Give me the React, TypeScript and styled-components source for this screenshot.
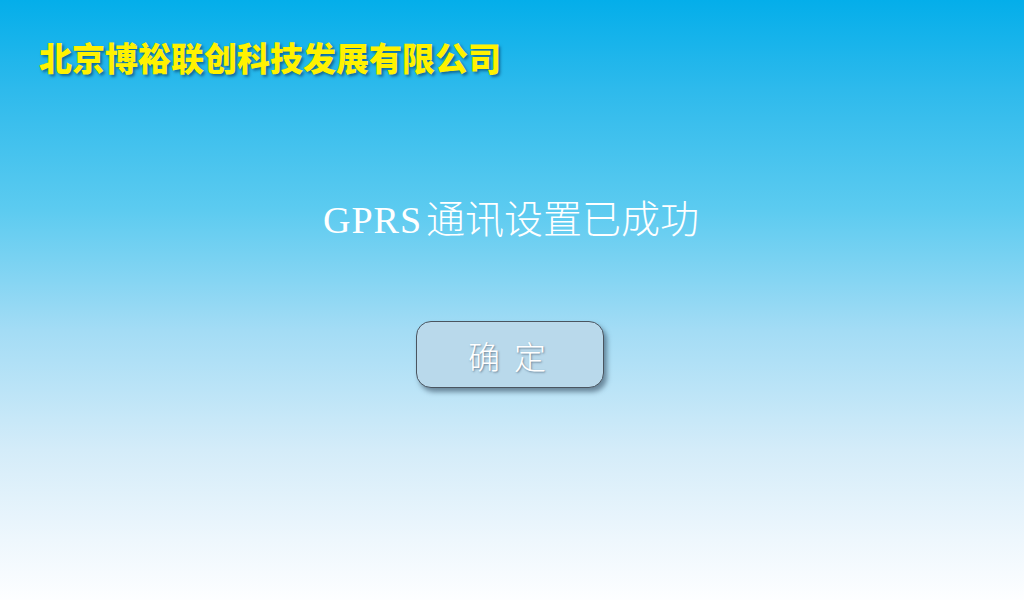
import React from "react";
import styled, { createGlobalStyle } from "styled-components";

const Global = createGlobalStyle`
  html, body { margin: 0; padding: 0; }
  body { width: 1024px; height: 600px; overflow: hidden; }
`;

const Screen = styled.div`
  width: 1024px;
  height: 600px;
  box-sizing: border-box;
  background: linear-gradient(
    to bottom,
    #04aeea 0%,
    #2ebaec 15%,
    #5ccbf0 35%,
    #a3dcf5 55%,
    #d4ecf9 75%,
    #eef7fd 90%,
    #fdfeff 100%
  );
  display: flex;
  flex-direction: column;
  align-items: center;
  padding-top: 36px;
`;

const Company = styled.h1`
  align-self: flex-start;
  margin: 0 0 0 39px;
  font-family: "Noto Sans CJK SC", sans-serif;
  font-weight: 900;
  font-size: 33px;
  line-height: 42px;
  letter-spacing: 0px;
  color: #fff200;
  text-shadow: 2px 2px 3px rgba(0, 40, 80, 0.55);
`;

const Message = styled.div`
  margin-top: 112px;
  margin-left: -2px;
  font-size: 39px;
  line-height: 52px;
  color: #ffffff;
  display: flex;
  align-items: baseline;
`;

const Latin = styled.span`
  font-family: "Liberation Serif", serif;
  font-size: 38px;
  letter-spacing: 1px;
  margin-right: 4px;
`;

const Cjk = styled.span`
  font-family: "Noto Sans CJK SC", sans-serif;
  font-weight: 300;
  font-size: 39px;
`;

const Button = styled.button`
  margin-top: 75px;
  margin-left: -4px;
  width: 188px;
  height: 67px;
  border: 1px solid #4a5560;
  border-radius: 15px;
  background: #b9d9eb;
  box-shadow: 3px 4px 5px rgba(40, 60, 80, 0.55);
  font-family: "Noto Sans CJK SC", sans-serif;
  font-weight: 300;
  font-size: 32px;
  letter-spacing: 14px;
  padding-left: 14px;
  color: #ffffff;
  text-shadow: 1px 1px 2px rgba(60, 80, 100, 0.6);
  cursor: pointer;
`;

export default function App() {
  return (
    <>
      <Global />
      <Screen>
        <Company>北京博裕联创科技发展有限公司</Company>
        <Message>
          <Latin>GPRS</Latin>
          <Cjk>通讯设置已成功</Cjk>
        </Message>
        <Button>确定</Button>
      </Screen>
    </>
  );
}
